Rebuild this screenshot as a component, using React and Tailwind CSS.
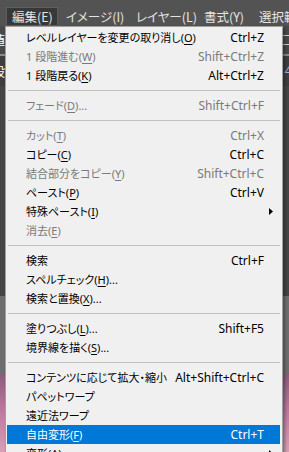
import React from "react";

const groups = [
  [
    { label: "レベルレイヤーを変更の取り消し", key: "O", sc: "Ctrl+Z" },
    { label: "1 段階進む", key: "W", sc: "Shift+Ctrl+Z", dis: true },
    { label: "1 段階戻る", key: "K", sc: "Alt+Ctrl+Z" },
  ],
  [{ label: "フェード", key: "D", dots: true, sc: "Shift+Ctrl+F", dis: true }],
  [
    { label: "カット", key: "T", sc: "Ctrl+X", dis: true },
    { label: "コピー", key: "C", sc: "Ctrl+C" },
    { label: "結合部分をコピー", key: "Y", sc: "Shift+Ctrl+C", dis: true },
    { label: "ペースト", key: "P", sc: "Ctrl+V" },
    { label: "特殊ペースト", key: "I", sub: true },
    { label: "消去", key: "E", dis: true },
  ],
  [
    { label: "検索", sc: "Ctrl+F" },
    { label: "スペルチェック", key: "H", dots: true },
    { label: "検索と置換", key: "X", dots: true },
  ],
  [
    { label: "塗りつぶし", key: "L", dots: true, sc: "Shift+F5" },
    { label: "境界線を描く", key: "S", dots: true },
  ],
  [
    { label: "コンテンツに応じて拡大・縮小", sc: "Alt+Shift+Ctrl+C" },
    { label: "パペットワープ" },
    { label: "遠近法ワープ" },
    { label: "自由変形", key: "F", sc: "Ctrl+T", active: true },
    { label: "変形", key: "A", sub: true },
  ],
];

function Arrow({ white }) {
  return (
    <svg width="4" height="7" viewBox="0 0 4 7" className="shrink-0">
      <path d="M0 0 L4 3.5 L0 7 Z" fill={white ? "#ffffff" : "#000000"} />
    </svg>
  );
}

function Item({ it }) {
  const color = it.active
    ? "text-white bg-[#0078d7]"
    : it.dis
    ? "text-[#7a7a7a]"
    : "text-black";
  return (
    <div className={`ml-[1px] mr-[2px] h-[19px] flex items-center pl-[19px] pr-[16px] ${color}`}>
      <span className="flex-1 whitespace-nowrap text-[11px] [font-feature-settings:'palt']">
        {it.label}
        {it.key && (
          <>
            (<u className="underline-offset-[2px]">{it.key}</u>)
          </>
        )}
        {it.dots && "..."}
      </span>
      {it.sc && <span className="whitespace-nowrap text-[12px]">{it.sc}</span>}
      {it.sub && (
        <span className="mr-[-9px] flex items-center">
          <Arrow white={it.active} />
        </span>
      )}
    </div>
  );
}

export default function App() {
  return (
    <div className="relative w-[289px] h-[452px] overflow-hidden bg-[#535353] font-['Noto_Sans','Noto_Sans_CJK_JP',sans-serif]">
      {/* menu bar */}
      <div className="h-[26px] overflow-hidden bg-[#535353] flex items-start pt-[7px] pl-[6px] text-[12.5px] leading-[17px] text-[#e4e4e4] font-['Noto_Sans_CJK_JP',sans-serif] [font-feature-settings:'palt']">
        <div className="shrink-0 w-[52px] h-[19px] flex items-center pl-[5px] whitespace-nowrap bg-[#383838] border border-[#5e5e5e]">編集(E)</div>
        <div className="shrink-0 w-[72px] h-[19px] flex items-center pl-[8px] whitespace-nowrap">イメージ(I)</div>
        <div className="shrink-0 w-[68px] h-[19px] flex items-center pl-[6px] whitespace-nowrap">レイヤー(L)</div>
        <div className="shrink-0 w-[55px] h-[19px] flex items-center pl-[6px] whitespace-nowrap">書式(Y)</div>
        <div className="shrink-0 h-[19px] flex items-center pl-[6px] whitespace-nowrap">選択範囲(S)</div>
      </div>

      {/* background content behind the menu */}
      <div className="flex flex-col">
        <div className="h-[28px] bg-[#4a4a4a] flex justify-between items-center text-[13px] text-white">
          <span className="ml-[-8px] font-['Noto_Sans_CJK_JP',sans-serif]">値</span>
          <span className="w-[14px] h-[10px] border border-[#cfcfcf] mr-[-6px]"></span>
        </div>
        <div className="h-[2px] bg-[#8a8a8a]"></div>
        <div className="h-[30px] bg-[#3e3e3e] flex justify-between items-center text-[13px] text-white">
          <span className="ml-[-8px] font-['Noto_Sans_CJK_JP',sans-serif]">段</span>
          <span className="mr-[-3px] text-[#a8b4c8]">4</span>
        </div>
        <div className="h-[210px] bg-[#454545]"></div>
        <div className="h-[78px] bg-[#6e6e6e]"></div>
        <div className="h-[78px] bg-gradient-to-b from-[#8a5c7a] via-[#c07aa0] to-[#d9a0b6]"></div>
      </div>

      {/* dropdown menu */}
      <div className="absolute left-[5px] top-[26px] w-[278px] bg-[#f0f0f0] border border-[#a0a0a0] pt-[1px] pb-[2px] leading-[19px] shadow-[2px_2px_3px_rgba(0,0,0,0.35)]">
        {groups.map((g, gi) => (
          <div key={gi}>
            {gi > 0 && (
              <div className="h-[11px] flex items-center pl-[2px] pr-[2px]">
                <div className="h-[1px] w-full bg-[#c2c2c2]"></div>
              </div>
            )}
            {g.map((it, ii) => (
              <Item key={ii} it={it} />
            ))}
          </div>
        ))}
      </div>
    </div>
  );
}
